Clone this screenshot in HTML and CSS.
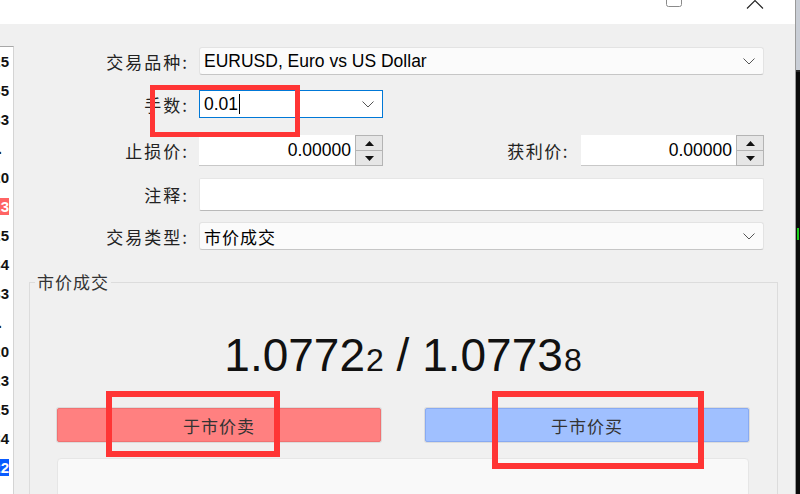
FILE: index.html
```html
<!DOCTYPE html>
<html lang="zh-CN">

<head>
    <meta charset="UTF-8">
    <meta name="viewport" content="width=device-width, initial-scale=1.0">
    <title>订单 - EURUSD</title>
    <link rel="stylesheet" href="styles.css">
</head>

<body>
    <div class="window">
        <div class="titlebar">
            <svg class="btn-max" width="16" height="8" viewBox="0 0 16 8">
                <path d="M0.5 0 V4.5 Q0.5 6.5 2.5 6.5 H13.5 Q15.5 6.5 15.5 4.5 V0" fill="none" stroke="#8a8a8a" />
            </svg>
            <svg class="btn-close" width="18" height="9" viewBox="0 0 18 9">
                <path d="M1 8.5 L9 0.5 L17 8.5" fill="none" stroke="#222" stroke-width="1.1" />
            </svg>
        </div>

        <div class="body">
            <div class="quotes">
                <div class="q"><span>1.07725</span></div>
                <div class="q"><span>1.07735</span></div>
                <div class="q"><span>1.07733</span></div>
                <div class="q dot"><span>.</span></div>
                <div class="q"><span>1.07720</span></div>
                <div class="q"><span class="down">1.07723</span></div>
                <div class="q"><span>1.07725</span></div>
                <div class="q"><span>1.07734</span></div>
                <div class="q"><span>1.07733</span></div>
                <div class="q dot"><span>.</span></div>
                <div class="q"><span>1.07720</span></div>
                <div class="q"><span>1.07723</span></div>
                <div class="q"><span>1.07725</span></div>
                <div class="q"><span>1.07734</span></div>
                <div class="q"><span class="up">1.07722</span></div>
                <div class="q dot"><span>.</span></div>
            </div>

            <div class="dialog">
                <div class="row row-symbol">
                    <div class="label">交易品种:</div>
                    <div class="select wide">
                        <span>EURUSD, Euro vs US Dollar</span>
                        <svg class="chevron" width="12" height="7" viewBox="0 0 12 7">
                            <path d="M0.5 0.5 L6 6 L11.5 0.5" fill="none" stroke="#555" />
                        </svg>
                    </div>
                </div>

                <div class="row row-volume">
                    <div class="label">手数:</div>
                    <div class="select volume">
                        <span>0.01<i class="caret"></i></span>
                        <svg class="chevron" width="12" height="7" viewBox="0 0 12 7">
                            <path d="M0.5 0.5 L6 6 L11.5 0.5" fill="none" stroke="#555" />
                        </svg>
                    </div>
                </div>

                <div class="row row-levels">
                    <div class="label">止损价:</div>
                    <div class="spin sl">
                        <div class="spin-input">0.00000</div>
                        <div class="spin-btns">
                            <div class="spin-btn"><svg width="9" height="5" viewBox="0 0 9 5"><path d="M0 5 L4.5 0 L9 5 Z" fill="#111" /></svg></div>
                            <div class="spin-btn"><svg width="9" height="5" viewBox="0 0 9 5"><path d="M0 0 L4.5 5 L9 0 Z" fill="#111" /></svg></div>
                        </div>
                    </div>
                    <div class="label label-tp">获利价:</div>
                    <div class="spin tp">
                        <div class="spin-input">0.00000</div>
                        <div class="spin-btns">
                            <div class="spin-btn"><svg width="9" height="5" viewBox="0 0 9 5"><path d="M0 5 L4.5 0 L9 5 Z" fill="#111" /></svg></div>
                            <div class="spin-btn"><svg width="9" height="5" viewBox="0 0 9 5"><path d="M0 0 L4.5 5 L9 0 Z" fill="#111" /></svg></div>
                        </div>
                    </div>
                </div>

                <div class="row row-comment">
                    <div class="label">注释:</div>
                    <div class="text-field"></div>
                </div>

                <div class="row row-type">
                    <div class="label">交易类型:</div>
                    <div class="select wide">
                        <span class="cjk">市价成交</span>
                        <svg class="chevron" width="12" height="7" viewBox="0 0 12 7">
                            <path d="M0.5 0.5 L6 6 L11.5 0.5" fill="none" stroke="#555" />
                        </svg>
                    </div>
                </div>

                <fieldset class="group">
                    <legend>市价成交</legend>
                    <div class="deal">
                        <div class="price">1.0772<span class="pip">2</span> / 1.0773<span class="pip">8</span></div>
                        <div class="actions">
                            <div class="btn sell">于市价卖</div>
                            <div class="btn buy">于市价买</div>
                        </div>
                        <div class="info-box"></div>
                    </div>
                </fieldset>
            </div>
        </div>
    </div>

    <div class="chart">
        <div class="chart-head"></div>
        <div class="chart-body">
            <div class="tick"></div>
        </div>
    </div>

    <!-- annotations -->
    <div class="mark mark-volume"></div>
    <div class="mark mark-sell"></div>
    <div class="mark mark-buy"></div>
</body>

</html>
```

FILE: styles.css
```css
body {
    margin: 0;
    width: 800px;
    height: 494px;
    overflow: hidden;
    display: flex;
    position: relative;
    font-family: "Noto Sans CJK SC", sans-serif;
    color: #222;
}

.window {
    width: 796px;
    height: 494px;
    flex: none;
    display: flex;
    flex-direction: column;
    border-right: 1px solid #9a9a9a;
    box-sizing: border-box;
    overflow: hidden;
}

.titlebar {
    height: 24px;
    flex: none;
    background: #fff;
    display: flex;
    justify-content: flex-end;
    align-items: flex-start;
    gap: 64px;
    padding-right: 31px;
}

.body {
    flex: 1;
    display: flex;
    background: #f0f0f0;
    min-height: 0;
    overflow: hidden;
}

/* quote list, cut at the left edge */
.quotes {
    width: 13px;
    flex: none;
    margin-top: 22px;
    background: #fff;
    border-top: 1px solid #a8a8a8;
    border-right: 1px solid #d4d4d4;
    overflow: hidden;
}

.q {
    height: 29px;
    display: flex;
    justify-content: flex-end;
    align-items: center;
    padding-right: 4px;
    font-family: "Liberation Sans", sans-serif;
    font-weight: bold;
    font-size: 15px;
    line-height: 17px;
    color: #111;
    white-space: nowrap;
}

.q.dot {
    padding-right: 11px;
}

.q .down {
    background: #ff6464;
    color: #fff;
}

.q .up {
    background: #0a5cff;
    color: #fff;
}

.dialog {
    flex: 1;
    padding-top: 23px;
}

.row {
    display: flex;
    align-items: center;
    padding-right: 31px;
}

.row-symbol { height: 28px; }
.row-volume { height: 28px; margin-top: 15px; }
.row-levels { height: 31px; margin-top: 17px; }
.row-comment { height: 33px; margin-top: 12px; }
.row-type { height: 28px; margin-top: 11px; }

.label {
    width: 175px;
    flex: none;
    margin-right: 10px;
    text-align: right;
    font-size: 17px;
    letter-spacing: 2px;
    color: #222;
}

.label-tp {
    flex: 1;
    width: auto;
    margin-right: 12px;
    letter-spacing: 1.5px;
}

.select {
    height: 100%;
    box-sizing: border-box;
    display: flex;
    align-items: center;
    justify-content: space-between;
    padding: 0 8px 0 4px;
    background: #fbfbfb;
    border: 1px solid #e3e3e3;
    border-bottom-color: #c6c6c6;
    border-radius: 3px;
    font-family: "Liberation Sans", sans-serif;
    font-size: 17.5px;
    color: #000;
}

.wide {
    flex: 1;
}

.select .cjk {
    font-family: "Noto Sans CJK SC", sans-serif;
    font-size: 17px;
    letter-spacing: 1px;
}

.volume {
    width: 184px;
    flex: none;
    background: #fff;
    border: 1px solid #0078d7;
    border-radius: 0;
}

.caret {
    display: inline-block;
    width: 1px;
    height: 20px;
    margin-left: 1px;
    background: #000;
    vertical-align: -4px;
}

.spin {
    height: 100%;
    flex: none;
    display: flex;
}

.sl { width: 184px; }
.tp { width: 183px; }

.spin-input {
    flex: 1;
    background: #fff;
    border-bottom: 1px solid #c8c8c8;
    display: flex;
    align-items: center;
    justify-content: flex-end;
    padding-right: 4px;
    font-family: "Liberation Sans", sans-serif;
    font-size: 17.5px;
    color: #000;
}

.spin-btns {
    width: 28px;
    display: flex;
    flex-direction: column;
    gap: 1px;
    background: #b4b4b4;
    border: 1px solid #b4b4b4;
    box-sizing: border-box;
}

.spin-btn {
    flex: 1;
    background: #e6e6e6;
    display: flex;
    align-items: center;
    justify-content: center;
}

.text-field {
    flex: 1;
    height: 100%;
    box-sizing: border-box;
    background: #fff;
    border: 1px solid #e6e6e6;
    border-bottom-color: #b9b9b9;
    border-radius: 2px;
}

/* market execution group */
.group {
    margin: 21px 17px 0 15px;
    padding: 0;
    border: 1px solid #dcdcdc;
    height: 260px;
}

.group legend {
    margin-left: 5px;
    padding: 0 2px;
    font-size: 17px;
    line-height: 22px;
    letter-spacing: 1px;
    color: #333;
}

.deal {
    padding: 37px 28px 0 27px;
}

.price {
    text-align: center;
    font-family: "Liberation Sans", sans-serif;
    font-size: 46px;
    line-height: 50px;
    color: #111;
}

.price .pip {
    font-size: 32px;
    margin-left: 1px;
}

.actions {
    display: grid;
    grid-template-columns: 1fr 1fr;
    gap: 44px;
    margin-top: 23px;
}

.btn {
    height: 34px;
    box-sizing: border-box;
    display: flex;
    align-items: center;
    justify-content: center;
    border-radius: 2px;
    font-size: 17px;
    letter-spacing: 1px;
    color: #333;
}

.sell {
    background: #ff8080;
    border: 1px solid #f07272;
    box-shadow: 0 0 0 1px #dcdcdc;
}

.buy {
    background: #a0c0ff;
    border: 1px solid #88aaf2;
    box-shadow: 0 0 0 1px #dcdcdc;
}

.info-box {
    margin-top: 16px;
    height: 60px;
    background: #f9f9f9;
    border: 1px solid #e6e6e6;
    border-radius: 4px;
}

/* chart edge on the right */
.chart {
    flex: 1;
    display: flex;
    flex-direction: column;
}

.chart-head {
    height: 70px;
    background: #c9ced6;
    border-bottom: 2px solid #2a2a2a;
}

.chart-body {
    flex: 1;
    background: #0b0b0b;
    position: relative;
}

.tick {
    position: absolute;
    left: 1px;
    top: 156px;
    width: 2px;
    height: 12px;
    background: #19d019;
}

/* red highlight frames */
.mark {
    position: absolute;
    box-sizing: border-box;
    border: 5px solid #ff3535;
}

.mark-volume {
    left: 150px;
    top: 85px;
    width: 150px;
    height: 52px;
}

.mark-sell {
    left: 106px;
    top: 391px;
    width: 174px;
    height: 66px;
    border-width: 6px;
}

.mark-buy {
    left: 492px;
    top: 391px;
    width: 212px;
    height: 78px;
    border-width: 6px;
}
```
